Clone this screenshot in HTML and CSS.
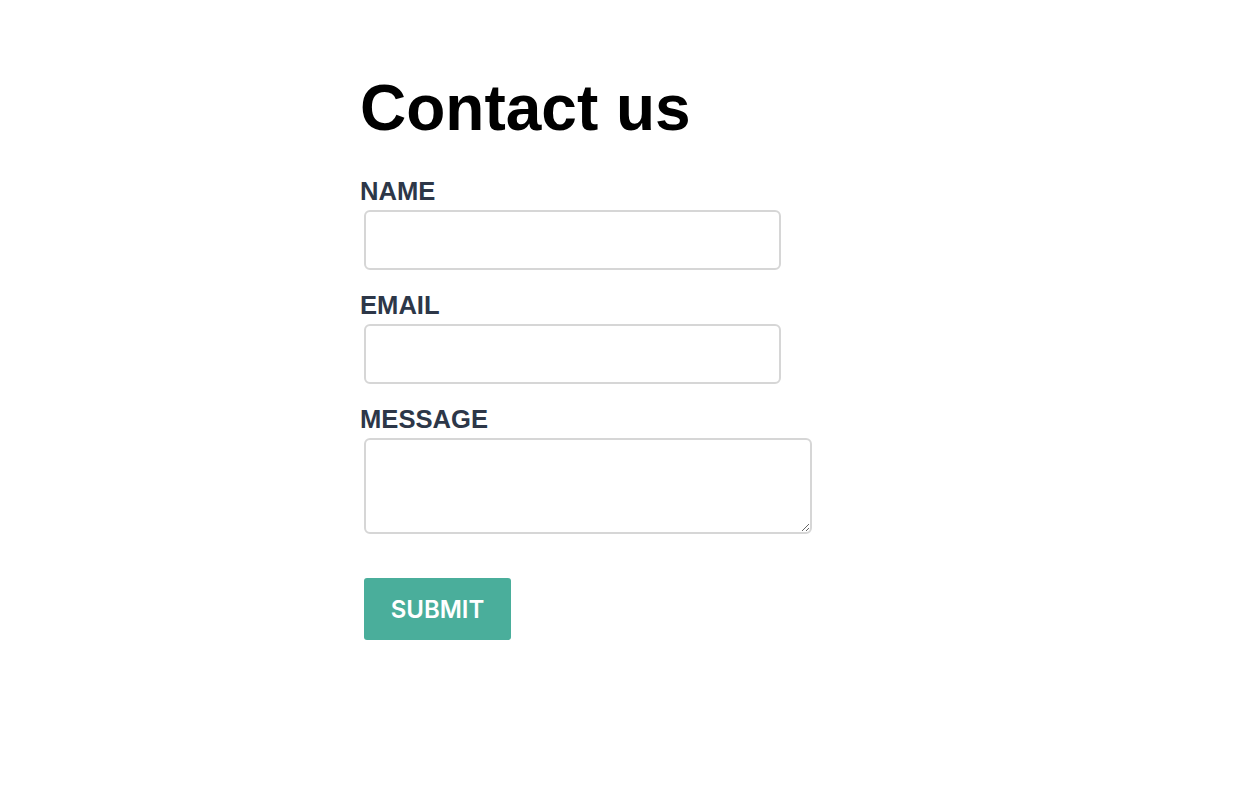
FILE: index.html
```html
<!DOCTYPE html>
<html>
  <head>
    <meta name="viewport" content="width=device-width, initial-scale=1.0" />
    <title>Contact us</title>
    <link rel="stylesheet" href="styles.css">
  </head>
  <body>
    <div class="container">
      <h1>Contact us</h1>
      <form class="contact-form">
        <label for="name">NAME</label>
        <input id="name" type="text" />

        <label for="email">EMAIL</label>
        <input id="email" type="email" />

        <label for="message">MESSAGE</label>
        <textarea id="message"></textarea>

        <button type="submit">SUBMIT</button>
      </form>
    </div>
  </body>
</html>
```

FILE: styles.css
```css
html {
  font-family: "Liberation Sans", Arial, sans-serif;
}
body {
  margin: 0;
  background: #fff;
}
.container {
  width: 532px;
  margin: 0 auto;
  padding-top: 71px;
}
h1 {
  margin: 0 0 31px;
  font-size: 64px;
  line-height: 74px;
  font-weight: bold;
  color: #000;
}
.contact-form label {
  display: block;
  font-size: 25.6px;
  line-height: 30px;
  font-weight: bold;
  color: #2d3748;
  margin-bottom: 4px;
}
.contact-form input,
.contact-form textarea {
  display: block;
  box-sizing: border-box;
  margin: 0 0 20px 4px;
  border: 2px solid #d6d6d6;
  border-radius: 6px;
  background: #fff;
  font-size: 18px;
  padding: 8px 12px;
  outline: 0;
}
.contact-form input {
  width: 417px;
  height: 60px;
}
.contact-form textarea {
  width: 448px;
  height: 96px;
  margin-bottom: 44px;
  font-family: inherit;
}
.contact-form button {
  display: block;
  margin-left: 4px;
  width: 147px;
  height: 62px;
  border: 0;
  border-radius: 3px;
  background-color: #4aae9b;
  color: #fff;
  font-family: Inter, "Open Sans", sans-serif;
  font-size: 24px;
  font-weight: 600;
  cursor: pointer;
}
```
